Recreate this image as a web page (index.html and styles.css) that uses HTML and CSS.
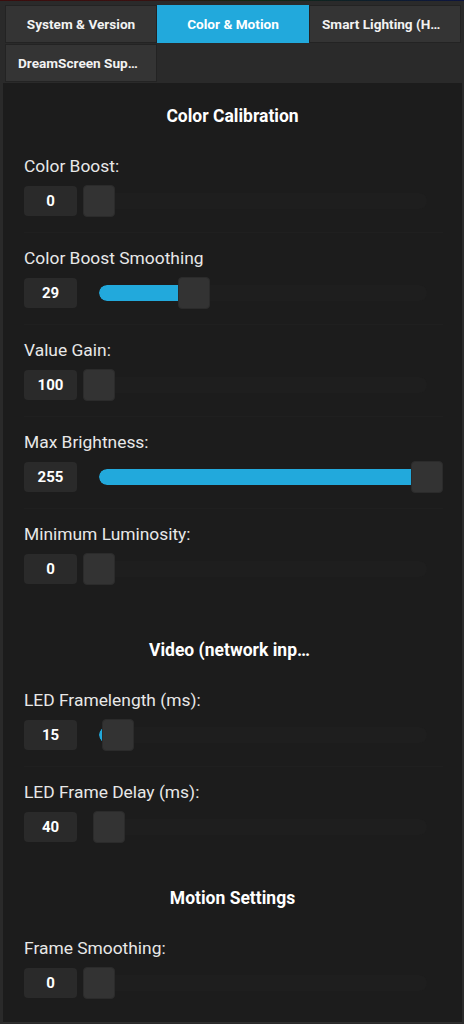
FILE: index.html
```html
<!DOCTYPE html>
<html>
<head>
<meta charset="utf-8">
<link rel="stylesheet" href="styles.css">
</head>
<body>
<div class="topline"></div>
<nav class="tabs">
  <div class="tab">System &amp; Version</div>
  <div class="tab active">Color &amp; Motion</div>
  <div class="tab">Smart Lighting (Hue, WiZ)</div>
  <div class="tab">DreamScreen Support</div>
</nav>
<main class="content">
  <section class="card card-first">
    <div class="section">
      <h2 class="section-title">Color Calibration</h2>
      <div class="row">
        <div class="label">Color Boost:</div>
        <div class="control"><div class="value">0</div><div class="slider" style="--p:0"><div class="track"><div class="fill"></div></div><div class="thumb"></div></div></div>
      </div>
      <div class="row">
        <div class="label">Color Boost Smoothing</div>
        <div class="control"><div class="value">29</div><div class="slider" style="--p:0.29"><div class="track"><div class="fill"></div></div><div class="thumb"></div></div></div>
      </div>
      <div class="row">
        <div class="label">Value Gain:</div>
        <div class="control"><div class="value">100</div><div class="slider" style="--p:0"><div class="track"><div class="fill"></div></div><div class="thumb"></div></div></div>
      </div>
      <div class="row">
        <div class="label">Max Brightness:</div>
        <div class="control"><div class="value">255</div><div class="slider" style="--p:1"><div class="track"><div class="fill"></div></div><div class="thumb"></div></div></div>
      </div>
      <div class="row">
        <div class="label">Minimum Luminosity:</div>
        <div class="control"><div class="value">0</div><div class="slider" style="--p:0"><div class="track"><div class="fill"></div></div><div class="thumb"></div></div></div>
      </div>
    </div>
  </section>
  <section class="card card-last">
    <div class="section">
      <h2 class="section-title">Video (network input)</h2>
      <div class="row">
        <div class="label">LED Framelength (ms):</div>
        <div class="control"><div class="value">15</div><div class="slider" style="--p:0.057"><div class="track"><div class="fill"></div></div><div class="thumb"></div></div></div>
      </div>
      <div class="row">
        <div class="label">LED Frame Delay (ms):</div>
        <div class="control"><div class="value">40</div><div class="slider" style="--p:0.03"><div class="track"><div class="fill"></div></div><div class="thumb"></div></div></div>
      </div>
    </div>
    <div class="section section-next">
      <h2 class="section-title">Motion Settings</h2>
      <div class="row">
        <div class="label">Frame Smoothing:</div>
        <div class="control"><div class="value">0</div><div class="slider" style="--p:0"><div class="track"><div class="fill"></div></div><div class="thumb"></div></div></div>
      </div>
    </div>
  </section>
</main>
</body>
</html>
```
FILE: styles.css
```css
* { box-sizing: border-box; }
html, body { margin: 0; padding: 0; }
body {
  background: #2a2a2a;
  font-family: Roboto, "Liberation Sans", sans-serif;
  color: #e6e6e6;
  width: 464px;
  height: 1024px;
  overflow: hidden;
}
.topline {
  height: 1px;
  background: linear-gradient(90deg, #3c0d0d 0%, #3a1010 30%, #0f2a12 55%, #0d1540 100%);
}
.tabs {
  display: flex;
  flex-wrap: wrap;
  padding: 4px 3px 0 5px;
}
.tab {
  width: 152px;
  height: 38px;
  line-height: 37px;
  padding: 0 12px;
  background: #343434;
  border: 1px solid #232323;
  color: #f2f2f2;
  font-weight: 700;
  font-size: 13.6px;
  text-align: center;
  white-space: nowrap;
  overflow: hidden;
  text-overflow: ellipsis;
  margin-bottom: 1px;
}
.tab.active {
  background: #22a9dc;
  border-color: #22a9dc;
  color: #ffffff;
}
.card {
  background: #1c1c1c;
  margin: 0 2px 0 3px;
  padding-bottom: 8px;
}
.card-last {
  border-bottom: 1px solid #2e2e2e;
}
.section {
  padding-top: 33px;
}
.card-first .section { padding-top: 24px; }
.section.section-next { padding-top: 31px; }
.section-title {
  margin: 0 0 15px;
  font-size: 17.5px;
  line-height: 19px;
  font-weight: 700;
  color: #ffffff;
  text-align: center;
  white-space: nowrap;
  overflow: hidden;
  text-overflow: ellipsis;
  padding: 0 146px;
}
.row {
  margin: 0 19px 0 21px;
  padding: 16px 0;
  border-bottom: 1px solid #1f1f1f;
}
.row:last-child { border-bottom: none; }
.label {
  font-size: 17.4px;
  line-height: 19px;
  color: #e8e8e8;
  margin-bottom: 10px;
  white-space: nowrap;
}
.control {
  display: flex;
  align-items: center;
  gap: 6px;
  height: 30px;
}
.value {
  width: 53px;
  height: 30px;
  line-height: 30px;
  background: #2a2a2a;
  border-radius: 4px;
  text-align: center;
  font-weight: 700;
  font-size: 15px;
  color: #ffffff;
}
.slider {
  position: relative;
  flex: 1;
  height: 32px;
}
.track {
  margin: 8px 16px 0;
  height: 16px;
  border-radius: 8px;
  background: #1e1e1e;
  overflow: hidden;
}
.fill {
  height: 100%;
  width: calc(var(--p) * 100%);
  background: #22a9dc;
  border-radius: 8px 0 0 8px;
}
.thumb {
  position: absolute;
  top: 0;
  left: calc(var(--p) * (100% - 32px));
  width: 32px;
  height: 32px;
  background: #333333;
  border: 1px solid #2b2b2b;
  border-radius: 4px;
}
```
